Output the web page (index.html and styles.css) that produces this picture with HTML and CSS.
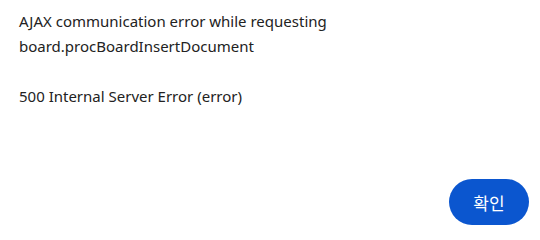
FILE: index.html
```html
<!DOCTYPE html>
<html lang="ko">
<head>
<meta charset="utf-8">
<link rel="stylesheet" href="styles.css">
</head>
<body>
<div class="dialog">
  <div class="message">AJAX communication error while requesting
board.procBoardInsertDocument

500 Internal Server Error (error)</div>
  <div class="actions">
    <button class="confirm" type="button">확인</button>
  </div>
</div>
</body>
</html>
```
FILE: styles.css
```css
html, body {
  margin: 0;
  padding: 0;
  background: #ffffff;
}
.dialog {
  width: 540px;
  height: 235px;
  box-sizing: border-box;
  padding: 9px 11px 10px 19px;
  display: flex;
  flex-direction: column;
  font-family: "Noto Sans", "Noto Sans CJK KR", sans-serif;
}
.message {
  flex: 1;
  white-space: pre-wrap;
  font-size: 15px;
  line-height: 25px;
  color: #222222;
}
.actions {
  display: flex;
  justify-content: flex-end;
}
.confirm {
  width: 80px;
  height: 46px;
  border: none;
  border-radius: 23px;
  background: #0b56cf;
  color: #ffffff;
  font-family: "Noto Sans CJK KR", sans-serif;
  font-size: 17px;
  padding: 0;
}
```
